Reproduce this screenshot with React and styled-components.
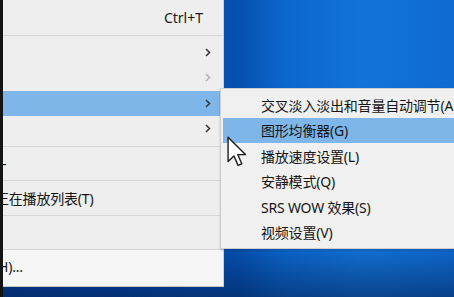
import React from 'react';
import styled, { createGlobalStyle } from 'styled-components';

const GlobalStyle = createGlobalStyle`
  html, body {
    margin: 0;
    padding: 0;
    overflow: hidden;
  }
  body {
    font-family: "Noto Sans", "Noto Sans CJK SC", sans-serif;
  }
`;

const Desktop = styled.div`
  position: relative;
  width: 454px;
  height: 297px;
  box-sizing: border-box;
  overflow: hidden;
  border-left: 3px solid #141414;
  display: flex;
  align-items: flex-start;
  background:
    linear-gradient(180deg, rgba(0, 0, 0, 0) 0%, rgba(0, 0, 0, 0) 82%, rgba(3, 30, 80, 0.55) 100%),
    linear-gradient(90deg, #04409a 0%, #0650b0 52%, #0c66cc 62%, #1274d8 80%, #0f6ad0 100%);
`;

const Menu = styled.div`
  width: 221px;
  box-sizing: border-box;
  padding: 5px 0 0;
  background: #eeeeee;
  border-right: 1px solid #d0d0d0;
  border-bottom: 1px solid #c4c4c4;
  overflow: hidden;
  font-size: 14px;
`;

const Row = styled.div`
  height: 25.5px;
  display: flex;
  align-items: center;
  padding-right: 10px;
  background: ${p => (p.$active ? '#7fb6ea' : 'transparent')};
  white-space: nowrap;
`;

const Label = styled.span`
  flex: 1;
  margin-left: ${p => p.$shift || 0}px;
  color: #151515;
  letter-spacing: -0.2px;
`;

const Shortcut = styled.span`
  margin-right: 10px;
  color: #1a1a1a;
`;

const Chevron = styled.svg`
  width: 6px;
  height: 9px;
  margin-right: 2px;
  flex: none;
  color: ${p => (p.$disabled ? '#b4b4b4' : '#3a3a3a')};
`;

const Separator = styled.div`
  height: 1px;
  margin: 4px 0;
  background: #d6d6d6;
`;

const BottomSection = styled.div`
  background: #f6f6f6;
  margin-top: -4px;
  padding: 4px 0 6px;
`;

const SubMenu = styled.div`
  position: absolute;
  left: 217px;
  top: 88px;
  width: 260px;
  box-sizing: border-box;
  padding: 3px 0 3px 2px;
  background: #f0f0f0;
  border: 1px solid #cfcfcf;
  font-size: 14px;
  box-shadow: 0 1px 2px rgba(0, 0, 0, 0.2);
`;

const SubRow = styled.div`
  height: 25.5px;
  display: flex;
  align-items: center;
  padding-left: 38px;
  white-space: nowrap;
  color: #151515;
  background: ${p => (p.$active ? '#7fb6ea' : 'transparent')};
  letter-spacing: -0.2px;
`;

const Cursor = styled.svg`
  position: absolute;
  left: 224px;
  top: 136px;
  width: 20px;
  height: 31px;
`;

const Arrow = ({ disabled }) => (
  <Chevron viewBox="0 0 6 9" $disabled={disabled}>
    <path d="M1 1 L4.5 4.5 L1 8" fill="none" stroke="currentColor" strokeWidth="1.6" />
  </Chevron>
);

const subItems = [
  '交叉淡入淡出和音量自动调节(A)',
  '图形均衡器(G)',
  '播放速度设置(L)',
  '安静模式(Q)',
  'SRS WOW 效果(S)',
  '视频设置(V)',
];

export default function App() {
  return (
    <Desktop>
      <GlobalStyle />
      <Menu>
        <Row>
          <Label />
          <Shortcut>Ctrl+T</Shortcut>
        </Row>
        <Separator />
        <Row>
          <Label />
          <Arrow />
        </Row>
        <Row>
          <Label />
          <Arrow disabled />
        </Row>
        <Row $active>
          <Label />
          <Arrow />
        </Row>
        <Row>
          <Label />
          <Arrow />
        </Row>
        <Separator />
        <Row>
          <Label $shift={-1}>-</Label>
        </Row>
        <Separator />
        <Row>
          <Label $shift={-8}>正在播放列表(T)</Label>
        </Row>
        <Separator />
        <Row>
          <Label />
        </Row>
        <Separator />
        <BottomSection>
          <Row>
            <Label $shift={-9}>(H)...</Label>
          </Row>
        </BottomSection>
      </Menu>

      <SubMenu>
        {subItems.map((item, i) => (
          <SubRow key={item} $active={i === 1}>{item}</SubRow>
        ))}
      </SubMenu>

      <Cursor viewBox="0 0 13 20">
        <path
          d="M0.7 0.7 L0.7 16.5 L4.5 12.9 L7.2 19 L9.6 18 L7 12 L12 12 Z"
          fill="#ffffff"
          stroke="#1a1a1a"
          strokeWidth="0.9"
          strokeLinejoin="round"
        />
      </Cursor>
    </Desktop>
  );
}
